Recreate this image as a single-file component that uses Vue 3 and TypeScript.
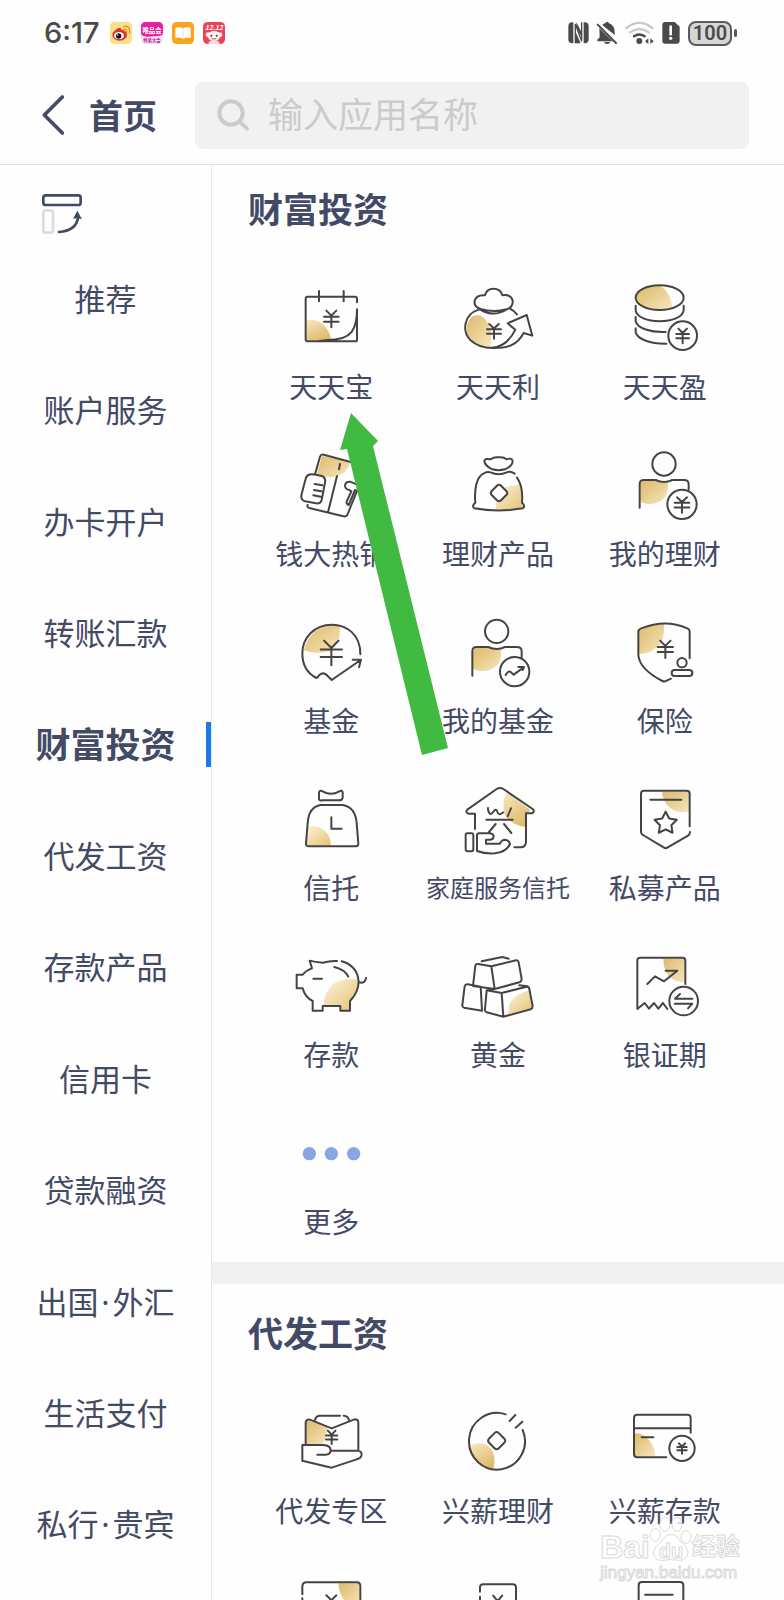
<script setup lang="ts">
import { ref } from 'vue'

interface Tile {
  label?: string
  box: string
  line?: string
  gold?: string
  tone?: 'soft' | 'rise' | 'deep'
  dots?: string
  small?: boolean
}

interface Section {
  title: string
  tiles: Tile[]
}

const circle = (cx: number, cy: number, r: number): string =>
  `M${cx - r} ${cy}a${r} ${r} 0 1 0 ${2 * r} 0a${r} ${r} 0 1 0 ${-2 * r} 0Z`

const coinMark = (cx: number, top: number, bottom: number, w: number): string => {
  const h = bottom - top
  const fork = top + 0.3 * h
  const arm = 0.34 * w
  const bar = (y: number) => `M${cx - w / 2} ${y}h${w}`
  return `M${cx - arm} ${top}L${cx} ${fork}L${cx + arm} ${top}M${cx} ${fork}V${bottom}${bar(top + 0.36 * h)}${bar(top + 0.66 * h)}`
}

const diamond = (cx: number, cy: number, r: number): string => {
  const k = r * 0.22
  return (
    `M${cx - k} ${cy - r + k}Q${cx} ${cy - r} ${cx + k} ${cy - r + k}` +
    `L${cx + r - k} ${cy - k}Q${cx + r} ${cy} ${cx + r - k} ${cy + k}` +
    `L${cx + k} ${cy + r - k}Q${cx} ${cy + r} ${cx - k} ${cy + r - k}` +
    `L${cx - r + k} ${cy + k}Q${cx - r} ${cy} ${cx - r + k} ${cy - k}Z`
  )
}

const star = (cx: number, cy: number, outer: number, inner: number): string => {
  const pts: string[] = []
  for (let i = 0; i < 10; i++) {
    const a = (Math.PI / 5) * i - Math.PI / 2
    const r = i % 2 ? inner : outer
    pts.push(`${(cx + r * Math.cos(a)).toFixed(1)} ${(cy + r * Math.sin(a)).toFixed(1)}`)
  }
  return `M${pts.join('L')}Z`
}

const categories = [
  '推荐', '账户服务', '办卡开户', '转账汇款', '财富投资', '代发工资',
  '存款产品', '信用卡', '贷款融资', '出国·外汇', '生活支付', '私行·贵宾',
]
const active = ref('财富投资')
const keyword = ref('')

const sections: Section[] = [
  {
    title: '财富投资',
    tiles: [
      {
        label: '天天宝', box: '153 54 240 240', tone: 'rise',
        gold: 'M199 180Q230 176 252 196Q270 214 273 241H199Z',
        line: 'M351 127V116Q351 110 345 110H203Q197 110 197 116V238Q197 244 203 244H346Q351 244 351 239V148C351 205 338 240 262 240L238 243M237 93V124M311 93V124' + coinMark(274, 152, 202, 44),
      },
      {
        label: '天天利', box: '654 54 240 240', tone: 'deep',
        gold: 'M698 168Q722 160 738 180Q762 210 750 261Q700 255 681 222Q676 186 698 168Z',
        line: 'M722 147Q700 140 704 122Q709 104 735 106Q740 86 760 86Q782 86 787 106Q813 102 818 122Q820 141 800 148Q760 158 722 147ZM720 148Q760 174 803 147M716 149C672 163 664 213 692 241C708 256 730 264 758 264M752 264C788 262 812 238 826 209L803 190L860 165L877 227L851 219C832 254 806 266 752 264M810 146Q822 152 831 163' + coinMark(762, 192, 236, 42),
      },
      {
        label: '天天盈', box: '423 54 240 240', tone: 'deep',
        gold: 'M457 113C458 88 490 78 530 78Q562 100 566 146C520 154 458 145 457 113Z',
        line: 'M455 113a72 37 0 1 0 144 0a72 37 0 1 0 -144 0ZM455 137V150C458 195 596 195 599 150V137M455 171V184C460 205 500 218 545 216M455 205V217C460 238 500 252 547 251' + circle(596, 227, 43) + coinMark(596, 206, 250, 38),
      },
      {
        label: '钱大热销', box: '153 555 240 240', tone: 'deep',
        gold: 'M246 588L330 606Q322 648 270 652Q245 650 231 640Z',
        line: 'M226 640L240 590Q243 582 251 584L385 620M203 735Q200 741 208 744L310 769Q320 771 323 762L360 670M291 648L264 757M300 612L297 628M205 645Q215 640 245 648Q258 652 255 668L245 720Q242 732 228 730L195 724Q182 720 184 706L196 660Q198 648 205 645ZM224 672L247 676M222 690L244 694M220 706L242 710M352 674L330 665Q315 665 315 678Q316 688 328 690L334 694L322 720Q316 732 326 735L345 690',
      },
      {
        label: '理财产品', box: '654 555 240 240', tone: 'soft',
        gold: 'M768 750V724L777 726L803 699L790 684Q812 674 845 674L848 742Q810 750 768 750Z',
        line: 'M733 603Q735 594 752 598Q762 590 776 592Q790 590 800 598Q815 592 818 603Q818 618 795 628Q775 633 757 628Q735 618 733 603ZM824 641Q812 632 800 637Q776 648 752 637Q742 634 736 638Q716 645 709 672Q703 700 706 728Q694 738 703 745Q775 758 848 745Q858 738 846 728Q850 680 831 653' + diamond(777, 699, 28),
      },
      {
        label: '我的理财', box: '423 555 240 240', tone: 'deep',
        gold: 'M469 675Q472 662 485 662H518Q535 668 552 665Q555 705 535 720Q505 740 469 726Z',
        line: circle(540, 612, 35) + 'M467 743V673Q467 660 480 660H515Q540 672 565 660H600Q614 660 614 673V689' + circle(594, 733, 44) + coinMark(594, 712, 758, 44),
      },
      {
        label: '基金', box: '153 66 240 240', tone: 'deep',
        gold: 'M191 180Q212 112 275 106Q300 106 300 115Q302 160 270 182Q230 197 191 180Z',
        line: 'M361 193C362 134 320 104 275 104C225 104 187 142 187 190C187 225 202 250 229 264Q234 262 238 255Q250 245 260 255L275 270L362 210M338 209H363L357 232' + coinMark(274, 152, 226, 64),
      },
      {
        label: '我的基金', box: '654 66 240 240', tone: 'deep',
        gold: 'M699 186Q702 173 715 173H748Q765 179 783 176Q786 214 766 231Q735 251 699 237Z',
        line: circle(770, 124, 35) + 'M697 257V184Q697 171 710 171H745Q770 183 795 171H830Q845 171 845 184V205' + circle(824, 245, 44) + 'M797 255Q806 240 812 246L821 254L851 232M835 231H852L848 240',
      },
      {
        label: '保险', box: '423 66 240 240', tone: 'deep',
        gold: 'M465 122Q500 104 540 102Q543 155 515 175Q495 192 465 192Z',
        line: 'M617 205V124Q617 118 610 115Q545 86 472 115Q463 118 463 125V195C466 230 500 255 535 273Q541 276 548 272L561 266' + circle(594, 218, 14) + 'M572 240H616Q625 240 625 249Q625 258 616 258H572Q563 258 563 249Q563 240 572 240Z' + coinMark(544, 152, 204, 46),
      },
      {
        label: '信托', box: '153 568 240 240', tone: 'soft',
        gold: 'M202 712Q230 702 252 722Q275 742 272 768H200Z',
        line: 'M237 628V608Q240 600 248 605Q273 620 298 605Q306 600 308 608V624Q306 633 296 632H248Q238 634 237 628ZM242 646H308Q346 652 350 700L355 762Q355 770 345 770H207Q197 770 198 760L203 700Q206 652 242 646ZM274 683V717H305',
      },
      {
        label: '家庭服务信托', box: '654 568 240 240', tone: 'rise', small: true,
        gold: 'M800 608L872 662L857 675V712Q815 708 795 675Q783 640 800 608Z',
        line: 'M705 718V672H685Q675 668 682 660L770 598Q780 592 790 598L878 658Q886 666 876 671H858V758Q856 773 842 773H823M744 655V660Q750 682 760 666Q769 654 772 666Q776 680 790 668M813 656L803 680M739 690H818M767 703L747 727M792 703L814 730M682 731H695Q700 731 700 737V779Q700 785 694 785H683Q677 785 677 779V737Q677 731 682 731ZM711 784V737Q711 731 717 731H750Q764 734 760 744Q758 750 750 750H738V762H780Q784 750 796 750Q808 752 810 763Q800 787 765 791Q735 793 711 784Z',
      },
      {
        label: '私募产品', box: '423 568 240 240', tone: 'deep',
        gold: 'M534 606H615V665Q580 675 553 650Q536 632 534 606Z',
        line: 'M617 710V612Q617 603 608 603H480Q471 603 471 612V728Q471 733 477 736L540 774Q545 777 550 774L612 738Q618 734 618 727M499 630H592' + star(545, 701, 35, 18),
      },
      {
        label: '存款', box: '153 51 240 240', tone: 'soft',
        gold: 'M356 152Q352 195 330 216V243H304V230H252Q248 195 280 165Q310 145 356 152Z',
        line: 'M291 96Q270 95 248 101Q225 100 209 95L216 118Q197 125 188 137H170V178H188Q195 205 218 216V245H248V231H301V245H330V216Q355 190 356 158Q352 110 305 97M283 114Q315 122 325 143M220 149H246M357 160Q375 165 378 147',
      },
      {
        label: '黄金', box: '654 51 240 240', tone: 'soft',
        gold: 'M806 256Q798 205 866 184L876 236Z',
        line: 'M699 171L706 110Q707 104 714 105L754 112L764 180ZM754 112L828 94Q834 93 836 100L845 150Q845 157 838 160L764 180M725 97L787 84L806 89M726 245L672 236Q666 234 667 228L674 172Q676 165 683 166L722 173ZM740 184L785 192L790 263L740 250Q733 247 735 240ZM785 192L860 173Q866 172 868 180L878 232Q878 238 872 241L790 263M740 184L764 180M838 169L862 172',
      },
      {
        label: '银证期', box: '423 51 240 240', tone: 'deep',
        gold: 'M538 89H602V160Q575 160 553 140Q538 120 538 89Z',
        line: 'M604 165V94Q604 86 596 86H468Q460 86 460 94V240L482 222L495 239L510 222L523 239L537 222L550 240M490 165L513 142L540 157L580 125H545' + circle(599, 216, 43) + 'M625 209H573L588 195M572 224H625L612 238',
      },
      {
        label: '更多', box: '153 552 240 240',
        dots: circle(208, 674, 20) + circle(274, 674, 20) + circle(341, 674, 20),
      },
    ],
  },
  {
    title: '代发工资',
    tiles: [
      {
        label: '代发专区', box: '153 66 240 240', tone: 'deep',
        gold: 'M199 124Q215 118 262 142Q260 180 245 194H199Z',
        line: 'M197 192V128Q198 117 210 119L275 145L343 118Q355 118 355 128V212M225 120Q228 107 240 107H300M311 107Q325 108 327 121M187 195H250Q272 196 272 212Q270 225 255 224H232M272 212H355Q368 215 364 228Q362 235 350 238L275 263L187 242V195' + coinMark(275, 152, 192, 34),
      },
      {
        label: '兴薪理财', box: '654 66 240 240', tone: 'rise',
        gold: 'M690 195Q730 180 752 205Q770 230 760 266Q700 255 690 195Z',
        line: 'M797 103A84 85 0 1 0 848 150M826 105L809 123M847 125L827 143' + diamond(770, 182, 29),
      },
      {
        label: '兴薪存款', box: '423 66 240 240', tone: 'deep',
        gold: 'M452 160Q475 157 495 180Q515 205 513 230H452Z',
        line: 'M620 158V114Q620 104 610 104H460Q450 104 450 114V222Q450 232 460 232H547M450 145H620M473 172H508' + circle(594, 205, 38) + coinMark(594, 190, 221, 28),
      },
      {
        box: '153 567 240 240', tone: 'deep',
        gold: 'M295 610H358V684Q300 675 295 610Z',
        line: 'M187 643V620Q187 607 200 607H350Q361 607 361 618V740M187 655V740' + coinMark(274, 646, 694, 44),
      },
      {
        box: '654 567 240 240',
        line: 'M720 635V622Q720 613 730 613H818Q828 613 828 622V740M720 650V740' + coinMark(773, 647, 700, 40),
      },
      {
        box: '423 567 240 240',
        line: 'M464 740V616Q464 606 474 606H588Q598 606 598 616V740M483 644H566',
      },
    ],
  },
]
</script>

<template>
  <div class="page">
    <svg class="defs" width="0" height="0" aria-hidden="true">
      <defs>
        <linearGradient id="gold-soft" x1="0" y1="0" x2="1" y2="1">
          <stop offset="0" stop-color="#fbf2dc" />
          <stop offset="1" stop-color="#e6c274" />
        </linearGradient>
        <linearGradient id="gold-rise" x1="0" y1="0" x2="0.6" y2="1">
          <stop offset="0" stop-color="#f7e8c4" />
          <stop offset="1" stop-color="#e0bb6b" />
        </linearGradient>
        <linearGradient id="gold-deep" x1="0" y1="0" x2="1" y2="1">
          <stop offset="0" stop-color="#dfbb6e" />
          <stop offset="0.4" stop-color="#e7cb8a" />
          <stop offset="1" stop-color="#f6e6c0" />
        </linearGradient>
      </defs>
    </svg>

    <div class="status">
      <span class="clock">6:17</span>
      <div class="apps">
        <svg viewBox="0 0 66 66">
          <rect width="66" height="66" rx="14" fill="#fbdf86" />
          <ellipse cx="29" cy="39" rx="22" ry="17" fill="#e0322b" />
          <path d="M14 26Q26 14 33 19L30 28Z" fill="#e0322b" />
          <ellipse cx="27" cy="41" rx="15" ry="11" fill="#fff" />
          <circle cx="26" cy="42" r="8" fill="#161616" />
          <circle cx="23" cy="39" r="2" fill="#fff" />
          <path d="M42 22Q51 20 50 31M42 13Q62 10 59 33" fill="none" stroke="#f08a2c" stroke-width="4" stroke-linecap="round" />
        </svg>
        <svg viewBox="0 0 66 66">
          <rect width="66" height="66" rx="14" fill="#fbe3f4" />
          <path d="M14 0H52Q66 0 66 14V34Q64 42 52 42L18 44Q2 44 0 34V14Q0 0 14 0Z" fill="#e5219f" />
          <text x="33" y="32" font-size="19" font-weight="700" fill="#fff" text-anchor="middle">唯品会</text>
          <text x="33" y="60" font-size="13" font-weight="700" fill="#b8168a" text-anchor="middle">特卖大会</text>
        </svg>
        <svg viewBox="0 0 66 66">
          <rect width="66" height="66" rx="14" fill="#f8a51b" />
          <path d="M33 19Q20 13 10 18V48Q22 44 33 51Q44 44 56 48V18Q46 13 33 19Z" fill="#fff" />
          <path d="M33 19V50" stroke="#e3d5b8" stroke-width="2" />
        </svg>
        <svg viewBox="0 0 66 66">
          <rect width="66" height="66" rx="14" fill="#e8455c" />
          <text x="33" y="23" font-size="20" font-weight="700" font-style="italic" fill="#fff" text-anchor="middle">12.12</text>
          <circle cx="15" cy="38" r="7" fill="#fbe7e4" />
          <circle cx="51" cy="38" r="7" fill="#fbe7e4" />
          <ellipse cx="33" cy="42" rx="19" ry="15" fill="#fff4f1" />
          <path d="M16 66Q17 54 33 54Q49 54 50 66Z" fill="#fbd9d3" />
          <circle cx="25" cy="41" r="3" fill="#54363a" />
          <circle cx="41" cy="41" r="3" fill="#54363a" />
          <path d="M26 49Q33 54 40 49" fill="none" stroke="#cf4452" stroke-width="3" />
        </svg>
      </div>
      <div class="signals">
        <svg class="glyphs" viewBox="552 63 339 72">
          <path d="M565 67H568V130H565Q553 130 553 118V79Q553 67 565 67ZM599 67H602Q614 67 614 79V118Q614 130 602 130H599Z" fill="#4a4a4a" />
          <path d="M574 130V72L593 124V67" fill="none" stroke="#4a4a4a" stroke-width="4" />
          <path d="M577 67L594 99V114L577 82ZM573 92L590 130H573Z" fill="#4a4a4a" />
          <path d="M655 75Q659 70 664 70Q665 65 669 65Q674 65 675 70Q692 76 692 96V105ZM646 85L686 124H640V119L647 112ZM660 126H679Q677 132 669 132Q662 132 660 126Z" fill="#4a4a4a" />
          <path d="M641 74L696 129" stroke="#4a4a4a" stroke-width="6" stroke-linecap="round" />
          <g fill="none" stroke-linecap="round" stroke-width="7">
            <path d="M727 84Q766 53 805 84M738 97Q766 77 794 97" stroke="#c9c9c9" />
            <path d="M750 109Q766 98 782 109" stroke="#4a4a4a" />
          </g>
          <circle cx="766" cy="123" r="9" fill="#4a4a4a" />
          <path d="M793 115V132L783 124ZM799 115V132L809 124Z" fill="#4a4a4a" />
          <path d="M844 66H872L887 80V122Q887 131 878 131H844Q835 131 835 122V75Q835 66 844 66Z" fill="#4a4a4a" />
          <path d="M860 80V103" stroke="#fff" stroke-width="8" stroke-linecap="round" />
          <circle cx="860" cy="115" r="5" fill="#fff" />
        </svg>
        <div class="battery">100</div>
        <i class="nub"></i>
      </div>
    </div>

    <header class="header">
      <button class="back" type="button">
        <svg viewBox="0 0 66 120"><path d="M61 6L7 60L61 114" /></svg>
        <span>首页</span>
      </button>
      <label class="search">
        <svg viewBox="0 0 96 96"><circle cx="42" cy="42" r="35" /><path d="M67 67L90 89" /></svg>
        <input v-model="keyword" type="text" placeholder="输入应用名称" />
      </label>
    </header>

    <div class="body">
      <nav class="side">
        <button class="switch" type="button">
          <svg viewBox="0 0 120 120">
            <rect x="4" y="4" width="112" height="29" rx="7" class="ink" />
            <rect x="4" y="49" width="29" height="67" rx="7" class="pale" />
            <path d="M51 114Q102 110 108 72" class="ink" />
            <path d="M106 50L120 76Q106 70 93 74Z" class="tip" />
          </svg>
        </button>
        <button
          v-for="name in categories"
          :key="name"
          type="button"
          class="cat"
          :class="{ active: name === active }"
          @click="active = name"
        >
          <template v-for="(part, p) in name.split('·')" :key="p"><span v-if="p" class="point">·</span>{{ part }}</template>
        </button>
      </nav>

      <main class="content">
        <section v-for="(section, i) in sections" :key="section.title" class="section">
          <h2>{{ section.title }}</h2>
          <div class="grid">
            <button v-for="(tile, n) in section.tiles" :key="n" type="button" class="tile">
              <svg :viewBox="tile.box" class="icon">
                <path v-if="tile.gold" :d="tile.gold" :fill="`url(#gold-${tile.tone})`" />
                <path v-if="tile.line" :d="tile.line" class="line" />
                <path v-if="tile.dots" :d="tile.dots" class="dots" />
              </svg>
              <span v-if="tile.label" :class="{ small: tile.small }">{{ tile.label }}</span>
            </button>
          </div>
          <svg v-if="i === 0" class="pointer" viewBox="0 0 108 342">
            <path d="M11 0L38 28L33 33L108 335L82 342L7 36L0 37Z" />
          </svg>
        </section>
      </main>
    </div>

    <div class="mark">
      <div class="brand">
        <span>Bai</span>
        <span class="paw">
          <svg viewBox="0 0 126 136">
            <ellipse cx="16" cy="56" rx="15" ry="19" />
            <ellipse cx="45" cy="24" rx="15" ry="21" />
            <ellipse cx="81" cy="24" rx="15" ry="21" />
            <ellipse cx="108" cy="62" rx="15" ry="19" />
            <path d="M63 55Q80 55 90 74Q114 92 114 110Q110 134 86 132Q63 127 40 132Q12 134 10 110Q12 92 36 74Q46 55 63 55Z" />
          </svg>
          <b>du</b>
        </span>
        <span class="cn">经验</span>
      </div>
      <div class="site">jingyan.baidu.com</div>
    </div>
  </div>
</template>

<style>
html,
body {
  margin: 0;
  background: #fefefe;
}
</style>

<style scoped>
.page {
  position: relative;
  display: flex;
  flex-direction: column;
  height: 100vh;
  overflow: hidden;
  background: #fefefe;
  color: #434a66;
  font-family: "Noto Sans CJK SC", sans-serif;
}

button {
  padding: 0;
  border: 0;
  background: none;
  color: inherit;
  font: inherit;
  cursor: pointer;
}

.defs {
  position: absolute;
}

.status {
  display: flex;
  align-items: center;
  height: 66px;
  padding: 0 47px 0 44px;
  flex: none;
}

.clock {
  font: 500 29px/36px Inter, sans-serif;
  color: #4a4a4a;
}

.apps {
  display: flex;
  gap: 9px;
  margin-left: 10px;
}

.apps svg {
  width: 22px;
  height: 22px;
}

.signals {
  display: flex;
  align-items: center;
  margin-left: auto;
}

.glyphs {
  width: 113px;
  height: 24px;
  margin-right: 7px;
}

.battery {
  box-sizing: border-box;
  width: 44px;
  height: 25px;
  border: 2px solid #5a5a5a;
  border-radius: 8px;
  background: #d6d6d6;
  color: #4a4a4a;
  font: 600 20px/21px Roboto, sans-serif;
  text-align: center;
}

.nub {
  width: 3px;
  height: 8px;
  margin-left: 2px;
  border-radius: 2px;
  background: #5a5a5a;
}

.header {
  box-sizing: border-box;
  display: flex;
  align-items: center;
  justify-content: space-between;
  gap: 38px;
  flex: none;
  height: 99px;
  padding: 0 35px 0 42px;
  border-bottom: 1px solid #e2e2e4;
}

.back {
  display: flex;
  align-items: center;
  gap: 25px;
  font-size: 34px;
  font-weight: 700;
  line-height: 48px;
}

.back svg {
  width: 22px;
  height: 40px;
  fill: none;
  stroke: #434a66;
  stroke-width: 11;
  stroke-linecap: round;
  stroke-linejoin: round;
}

.search {
  display: flex;
  align-items: center;
  flex: 1;
  height: 67px;
  padding-left: 22px;
  border-radius: 8px;
  background: #f1f1f1;
}

.search svg {
  flex: none;
  width: 32px;
  height: 32px;
  fill: none;
  stroke: #cbcbcb;
  stroke-width: 12;
  stroke-linecap: round;
}

.search input {
  flex: 1;
  min-width: 0;
  margin-left: 19px;
  padding: 0 0 4px;
  border: 0;
  outline: 0;
  background: none;
  color: #434a66;
  font: 400 35px/50px "Noto Sans CJK SC", sans-serif;
}

.search input::placeholder {
  color: #cbcbcb;
  opacity: 1;
}

.body {
  display: flex;
  flex: 1;
  min-height: 0;
}

.side {
  display: flex;
  flex-direction: column;
  flex: none;
  box-sizing: border-box;
  width: 212px;
  padding-bottom: 20px;
  border-right: 1px solid #e6e6e8;
}

.switch {
  flex: none;
  height: 78px;
  padding: 29px 0 9px 42px;
  text-align: left;
  line-height: 0;
}

.switch svg {
  width: 40px;
  height: 40px;
  fill: none;
  stroke-width: 8;
  stroke-linecap: round;
}

.ink {
  stroke: #434a66;
}

.pale {
  stroke: #dcdcde;
}

.tip {
  fill: #434a66;
}

.cat {
  position: relative;
  flex: 1;
  padding-bottom: 2px;
  font-size: 31px;
  line-height: 44px;
}

.point {
  display: inline-block;
  width: 14px;
  font-family: "Noto Sans", sans-serif;
  line-height: 30px;
  text-align: center;
}

.cat.active {
  font-size: 35px;
  font-weight: 700;
}

.cat.active::after {
  content: "";
  position: absolute;
  top: calc(50% - 22px);
  right: 0;
  width: 5px;
  height: 45px;
  background: #1a7be8;
}

.content {
  flex: 1;
  min-width: 0;
  overflow: hidden;
}

.section {
  position: relative;
  padding: 19px 36px 24px;
}

.section + .section {
  padding-top: 46px;
}

.section + .section::before {
  content: "";
  position: absolute;
  inset: 0 0 auto;
  height: 22px;
  background: #f1f1f2;
}

h2 {
  margin: 0 0 46px;
  font-size: 35px;
  font-weight: 700;
  line-height: 48px;
}

.grid {
  display: grid;
  grid-template-columns: repeat(3, 1fr);
  row-gap: 42px;
}

.tile {
  display: flex;
  flex-direction: column;
  align-items: center;
  gap: 11px;
  font-size: 28px;
  line-height: 34px;
  white-space: nowrap;
}

.small {
  font-size: 24px;
}

.icon {
  width: 80px;
  height: 80px;
}

.line {
  fill: none;
  stroke: #454443;
  stroke-width: 6;
  stroke-linecap: round;
  stroke-linejoin: round;
}

.dots {
  fill: #8ba5e3;
}

.pointer {
  position: absolute;
  left: 128px;
  top: 248px;
  width: 108px;
  height: 342px;
  fill: #41ba41;
}

.mark {
  position: absolute;
  right: 44px;
  bottom: 16px;
  color: #fff;
  font-family: "Liberation Sans", "Noto Sans CJK SC", sans-serif;
  -webkit-text-stroke: 1px #dadada;
}

.brand {
  display: flex;
  align-items: flex-end;
  justify-content: space-between;
  font-size: 32px;
  font-weight: 700;
  line-height: 30px;
}

.paw {
  position: relative;
  width: 42px;
  height: 46px;
}

.paw svg {
  width: 42px;
  height: 46px;
  fill: #fff;
  fill-opacity: 0.8;
  stroke: #dadada;
  stroke-width: 3;
}

.paw b {
  position: absolute;
  left: 0;
  right: 0;
  bottom: 0;
  font-size: 20px;
  line-height: 22px;
  text-align: center;
}

.cn {
  font-size: 24px;
}

.site {
  font-size: 17px;
  line-height: 22px;
}
</style>
